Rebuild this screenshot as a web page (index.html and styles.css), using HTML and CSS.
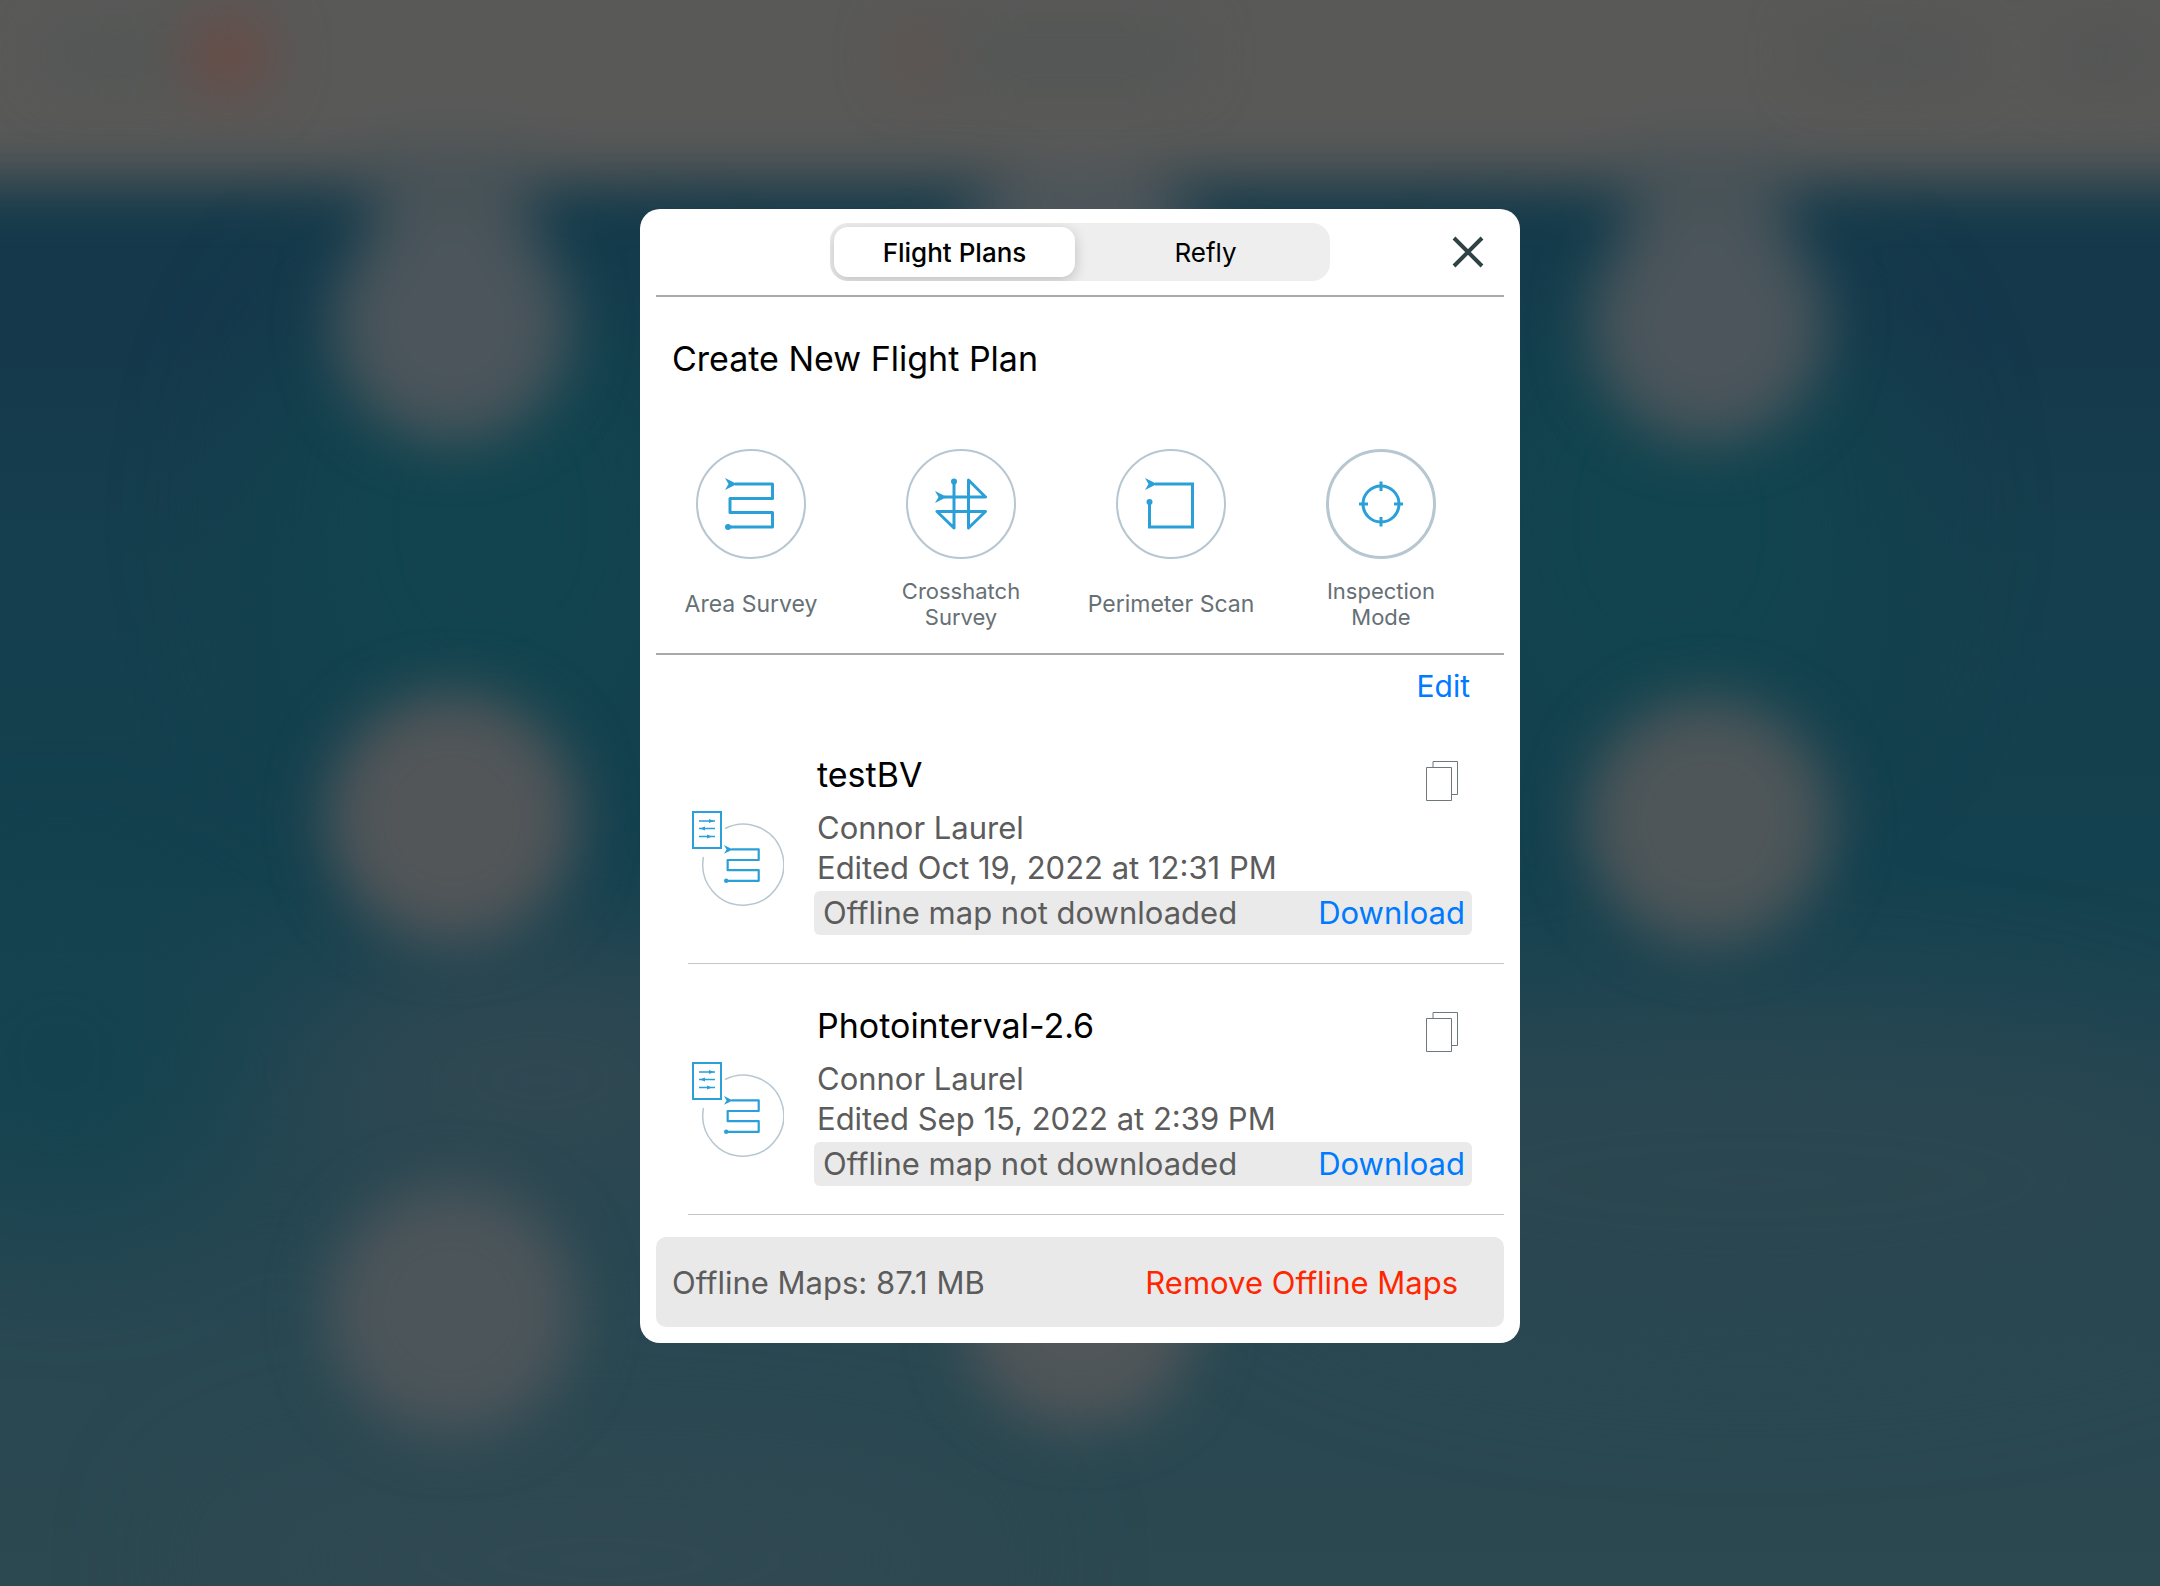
FILE: index.html
```html
<!DOCTYPE html>
<html lang="en">
<head>
<meta charset="utf-8">
<meta name="viewport" content="width=device-width, initial-scale=1">
<title>Flight Plans</title>
<link rel="stylesheet" href="styles.css">
</head>
<body>
<svg class="backdrop" viewBox="0 0 2160 1586" preserveAspectRatio="none" aria-hidden="true">
  <defs>
    <linearGradient id="sea" x1="0" y1="0" x2="0" y2="1">
      <stop offset="0.13" stop-color="#153a4b"/>
      <stop offset="0.2" stop-color="#15384b"/>
      <stop offset="0.36" stop-color="#153f4e"/>
      <stop offset="0.55" stop-color="#14414f"/>
      <stop offset="0.7" stop-color="#234652"/>
      <stop offset="0.85" stop-color="#294852"/>
      <stop offset="1" stop-color="#2c4851"/>
    </linearGradient>
    <filter id="soft" x="-50%" y="-50%" width="200%" height="200%" color-interpolation-filters="sRGB"><feGaussianBlur stdDeviation="28"/></filter>
    <filter id="wide" x="-50%" y="-50%" width="200%" height="200%" color-interpolation-filters="sRGB"><feGaussianBlur stdDeviation="70"/></filter>
  </defs>
  <rect width="2160" height="1586" fill="url(#sea)"/>
  <g filter="url(#wide)">
    <ellipse cx="490" cy="520" rx="220" ry="260" fill="#12444f"/>
    <ellipse cx="1670" cy="520" rx="220" ry="260" fill="#12444f"/>
    <ellipse cx="1750" cy="1180" rx="500" ry="160" fill="#2b4751"/>
    <ellipse cx="540" cy="1080" rx="230" ry="130" fill="#304852"/>
    <ellipse cx="60" cy="1060" rx="170" ry="160" fill="#14434f"/>
    <ellipse cx="600" cy="1560" rx="400" ry="90" fill="#314953"/>
  </g>
  <g filter="url(#soft)">
    <rect x="-100" y="-100" width="2360" height="281" fill="#595958"/>
    <rect x="372" y="150" width="160" height="120" fill="#465257"/>
    <rect x="1628" y="150" width="160" height="120" fill="#465257"/>
    <circle cx="452" cy="325" r="118" fill="#4b555b"/>
    <circle cx="452" cy="818" r="126" fill="#525659"/>
    <circle cx="452" cy="1310" r="126" fill="#4c555a"/>
    <circle cx="1708" cy="325" r="118" fill="#4b555b"/>
    <circle cx="1708" cy="822" r="124" fill="#4e5659"/>
    <circle cx="1080" cy="1310" r="118" fill="#505659"/>
    <circle cx="1080" cy="320" r="150" fill="#4b555b"/>
  </g>
  <g filter="url(#soft)">
    <rect x="50" y="30" width="130" height="50" fill="#525655"/>
    <circle cx="228" cy="55" r="42" fill="#694b45"/>
    <rect x="960" y="30" width="230" height="50" fill="#525655"/>
    <circle cx="920" cy="55" r="26" fill="#61514c"/>
    <rect x="1810" y="30" width="160" height="50" fill="#525453"/>
    <rect x="2060" y="30" width="90" height="50" fill="#525453"/>
  </g>
</svg>

<svg class="symbols" aria-hidden="true">
  <symbol id="path-area" viewBox="0 0 52 52">
    <path d="M10 6H47.500V20.500H5V34.500H47.500V49H4" fill="none" stroke="#2a9fd8" stroke-width="3" stroke-linejoin="round"/>
    <path d="M0 0L12 6L0 12L3.500 6Z" fill="#2a9fd8"/>
    <circle cx="3" cy="49" r="3" fill="#2a9fd8"/>
  </symbol>
</svg>

<main class="dialog" role="dialog" aria-label="Flight plans">
  <header class="topbar">
    <div class="segments" role="tablist">
      <button class="segment segment-active" role="tab" aria-selected="true">Flight Plans</button>
      <button class="segment" role="tab" aria-selected="false">Refly</button>
    </div>
    <button class="close" aria-label="Close">
      <svg width="32" height="32" viewBox="0 0 32 32"><path d="M2 2L30 30M30 2L2 30" stroke="#2f4347" stroke-width="4" fill="none"/></svg>
    </button>
  </header>

  <section class="create">
    <h1 class="title">Create New Flight Plan</h1>
    <div class="modes">
      <button class="mode">
        <span class="ring"><svg width="52" height="52"><use href="#path-area"/></svg></span>
        <span class="mode-label">Area Survey</span>
      </button>
      <button class="mode">
        <span class="ring"><svg width="52" height="52" viewBox="0 0 52 52">
          <path d="M19 3V50L2 33.500H50.500L33.500 50V2L50.500 19H9" fill="none" stroke="#2a9fd8" stroke-width="3" stroke-linejoin="round"/>
          <path d="M0 13L12 19L0 25L3.500 19Z" fill="#2a9fd8"/>
          <circle cx="19" cy="3.500" r="3" fill="#2a9fd8"/>
        </svg></span>
        <span class="mode-label mode-label-small">Crosshatch<br>Survey</span>
      </button>
      <button class="mode">
        <span class="ring"><svg width="52" height="52" viewBox="0 0 52 52">
          <path d="M10 6H47.500V49H4.500V24" fill="none" stroke="#2a9fd8" stroke-width="3"/>
          <path d="M0 0L12 6L0 12L3.500 6Z" fill="#2a9fd8"/>
          <circle cx="4.500" cy="24" r="3" fill="#2a9fd8"/>
        </svg></span>
        <span class="mode-label">Perimeter Scan</span>
      </button>
      <button class="mode">
        <span class="ring ring-bold"><svg width="52" height="52" viewBox="0 0 52 52">
          <g fill="none" stroke="#2a9fd8" stroke-width="3"><circle cx="26" cy="26" r="18"/>
          <path d="M26 3.500V13M26 39V48.500M4 26H13M39 26H48"/></g>
        </svg></span>
        <span class="mode-label mode-label-small">Inspection<br>Mode</span>
      </button>
    </div>
  </section>

  <section class="plans">
    <div class="toolbar"><button class="link edit">Edit</button></div>
    <ul class="plan-list">
      <li class="plan">
        <svg class="plan-icon" width="96" height="96" viewBox="0 0 96 96" aria-hidden="true">
          <path d="M37 17.500A40.500 40.500 0 1 1 15.500 46" fill="none" stroke="#b7c7d1" stroke-width="1.500"/>
          <rect x="5" y="1" width="28" height="36" fill="none" stroke="#2a9fd8" stroke-width="2"/>
          <path d="M11 10H27M11 17.500H27M11 25.500H27" stroke="#2a9fd8" stroke-width="1.500"/>
          <path d="M21 8L26 10L21 12ZM17 15.500L12 17.500L17 19.500ZM19 23.500L24 25.500L19 27.500Z" fill="#2a9fd8"/>
          <svg x="36" y="34" width="38" height="38"><use href="#path-area"/></svg>
        </svg>
        <div class="plan-body">
          <div class="plan-head">
            <h2 class="plan-name">testBV</h2>
            <button class="copy" aria-label="Duplicate testBV"><svg width="32" height="40" viewBox="0 0 32 40"><path d="M7 6V.5H31.500V33.500H26M.5 6.500H25.500V39.500H.5Z" fill="none" stroke="#6d777c"/></svg></button>
          </div>
          <p class="meta">Connor Laurel</p>
          <p class="meta">Edited Oct 19, 2022 at 12:31 PM</p>
          <div class="offline"><span>Offline map not downloaded</span><button class="link">Download</button></div>
        </div>
      </li>
      <li class="plan">
        <svg class="plan-icon" width="96" height="96" viewBox="0 0 96 96" aria-hidden="true">
          <path d="M37 17.500A40.500 40.500 0 1 1 15.500 46" fill="none" stroke="#b7c7d1" stroke-width="1.500"/>
          <rect x="5" y="1" width="28" height="36" fill="none" stroke="#2a9fd8" stroke-width="2"/>
          <path d="M11 10H27M11 17.500H27M11 25.500H27" stroke="#2a9fd8" stroke-width="1.500"/>
          <path d="M21 8L26 10L21 12ZM17 15.500L12 17.500L17 19.500ZM19 23.500L24 25.500L19 27.500Z" fill="#2a9fd8"/>
          <svg x="36" y="34" width="38" height="38"><use href="#path-area"/></svg>
        </svg>
        <div class="plan-body">
          <div class="plan-head">
            <h2 class="plan-name">Photointerval-2.6</h2>
            <button class="copy" aria-label="Duplicate Photointerval-2.6"><svg width="32" height="40" viewBox="0 0 32 40"><path d="M7 6V.5H31.500V33.500H26M.5 6.500H25.500V39.500H.5Z" fill="none" stroke="#6d777c"/></svg></button>
          </div>
          <p class="meta">Connor Laurel</p>
          <p class="meta">Edited Sep 15, 2022 at 2:39 PM</p>
          <div class="offline"><span>Offline map not downloaded</span><button class="link">Download</button></div>
        </div>
      </li>
    </ul>
  </section>

  <footer class="storage">
    <span>Offline Maps: 87.1 MB</span>
    <button class="link remove">Remove Offline Maps</button>
  </footer>
</main>
</body>
</html>
```
FILE: styles.css
```css
* {
  box-sizing: border-box;
}

body {
  margin: 0;
  min-height: 100vh;
  display: flex;
  align-items: center;
  justify-content: center;
  padding: 0 16px 34px;
  background: #1c424e;
  font-family: Inter, "Liberation Sans", sans-serif;
  color: #000;
}

.backdrop {
  position: fixed;
  inset: 0;
  width: 100%;
  height: 100%;
  z-index: -1;
}

.symbols {
  position: absolute;
  width: 0;
  height: 0;
}

button {
  margin: 0;
  padding: 0;
  border: 0;
  background: none;
  font: inherit;
  color: inherit;
  cursor: pointer;
}

svg {
  display: block;
}

.dialog {
  width: 100%;
  max-width: 880px;
  padding: 0 16px 16px;
  border-radius: 20px;
  background: #fff;
}

.topbar {
  display: grid;
  grid-template-columns: 1fr 500px 1fr;
  align-items: center;
  padding: 14px 0;
  border-bottom: 2px solid #a9a9ab;
}

.segments {
  grid-column: 2;
  display: grid;
  grid-template-columns: 1fr 1fr;
  gap: 10px;
  height: 58px;
  padding: 4px;
  border-radius: 18px;
  background: #eee;
  overflow: hidden;
}

.segment {
  border-radius: 14px;
  font-size: 26px;
}

.segment-active {
  background: #fff;
  box-shadow: 0 4px 14px rgba(0, 0, 0, 0.2);
  font-weight: 500;
}

.close {
  justify-self: end;
  margin-right: 20px;
}

.create {
  padding: 40px 0 22px;
  border-bottom: 2px solid #a9a9ab;
}

.title {
  margin: 0;
  padding-left: 16px;
  font-size: 34px;
  line-height: 44px;
  font-weight: 400;
}

.modes {
  display: grid;
  grid-template-columns: repeat(4, 1fr);
  margin-top: 68px;
  padding: 0 18px 0 0;
  margin-left: -10px;
}

.mode {
  display: flex;
  flex-direction: column;
  align-items: center;
  gap: 18px;
}

.ring {
  display: flex;
  align-items: center;
  justify-content: center;
  width: 110px;
  height: 110px;
  border: 2px solid #b7c7d1;
  border-radius: 50%;
}

.ring-bold {
  border-width: 3px;
}

.mode-label {
  display: flex;
  align-items: center;
  height: 54px;
  font-size: 23px;
  line-height: 26px;
  color: #667075;
  white-space: nowrap;
}

.mode-label-small {
  font-size: 22px;
}

.toolbar {
  display: flex;
  justify-content: flex-end;
  padding: 11px 34px 0 0;
}

.link {
  color: #007aff;
}

.edit {
  font-size: 30px;
  line-height: 40px;
}

.plan-list {
  margin: 7px 0 0;
  padding: 0;
  list-style: none;
}

.plan {
  display: flex;
  gap: 30px;
  margin-left: 32px;
  padding: 38px 32px 28px 0;
  border-bottom: 1px solid #c6c6c8;
}

.plan-icon {
  flex: none;
  margin-top: 60px;
}

.plan-body {
  flex: 1;
}

.plan-head {
  display: flex;
  justify-content: space-between;
  height: 57px;
  padding: 0 14px 0 3px;
}

.plan-name {
  margin: 0;
  font-size: 34px;
  line-height: 48px;
  font-weight: 400;
}

.copy {
  align-self: flex-start;
  margin-top: 10px;
}

.meta {
  margin: 0;
  padding-left: 3px;
  font-size: 31px;
  line-height: 40px;
  color: #5c5c5c;
}

.offline {
  display: flex;
  align-items: center;
  justify-content: space-between;
  height: 44px;
  margin-top: 3px;
  padding: 0 7px 2px 9px;
  border-radius: 6px;
  background: #eaeaea;
  color: #5c5c5c;
  font-size: 31px;
}

.storage {
  display: flex;
  align-items: center;
  justify-content: space-between;
  height: 90px;
  margin-top: 22px;
  padding: 0 46px 0 16px;
  border-radius: 10px;
  background: #e9e9e9;
  color: #5c5c5c;
  font-size: 31px;
}

.remove {
  color: #ff2600;
}
```
